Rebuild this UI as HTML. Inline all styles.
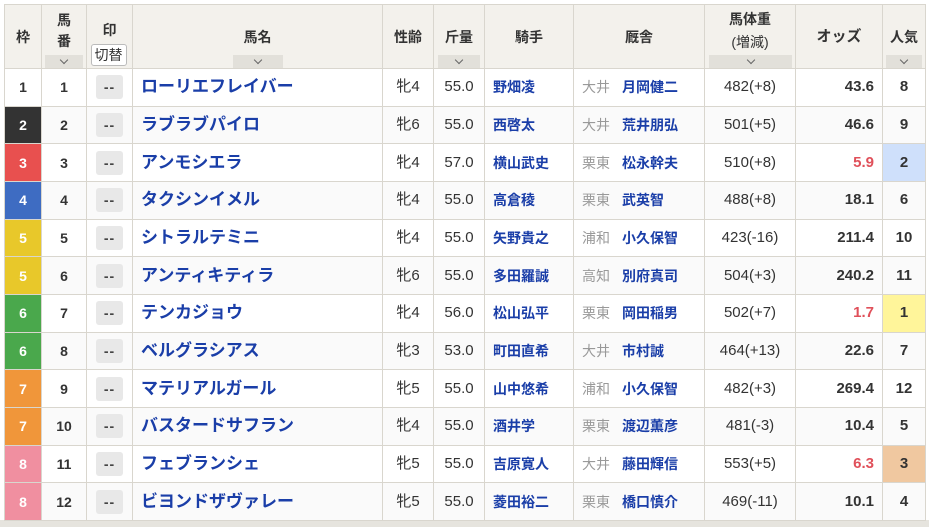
<!DOCTYPE html><html><head><meta charset="utf-8"><style>
body{margin:0;background:#fff;width:929px;height:527px;overflow:hidden;font-family:"Liberation Sans","Noto Sans CJK JP",sans-serif;}
.bg{position:absolute;left:0;top:520px;width:929px;height:7px;background:#e6e4de}
table{position:absolute;left:4px;top:4px;border-collapse:collapse;table-layout:fixed;width:921px}
td,th{border:1px solid #d9d6ce;padding:0;text-align:center;font-size:15px;color:#333;white-space:nowrap;overflow:hidden;line-height:18px}
th{background:#f3f1ec;font-weight:bold;font-size:14px;color:#333}
th>div{position:relative;height:63px;overflow:hidden}
th .t{position:absolute;left:0;right:0;line-height:18px}
.sel{position:absolute;left:50%;top:50px;height:13px;background:#e2e0da}
.sel:after{content:"";position:absolute;left:50%;top:2px;width:5px;height:5px;margin-left:-3px;border-right:1px solid #666;border-bottom:1px solid #666;transform:rotate(45deg)}
tr.r td{height:36.67px;vertical-align:middle}
tr.r:nth-child(odd) td{background:#fafafa}
.w{font-weight:bold;font-size:14px}
.mk{display:inline-block;width:27px;height:24px;background:#e8e8e8;border-radius:3px;font-weight:bold;line-height:24px;color:#444;font-size:14px;vertical-align:middle;letter-spacing:1px}
.nm{text-align:left;padding-left:8px;color:#1a3ea8;font-weight:bold;font-size:17px}
.jk{color:#1a3ea8;font-weight:bold;text-align:left;padding-left:8px;font-size:14px}
.tr{text-align:left;padding-left:8px;font-size:14px}
.tr span{color:#999;margin-right:12px}.tr b{color:#1a3ea8}
.od{text-align:right;padding-right:8px;font-weight:bold}
.red{color:#e0505a}
.pp{font-weight:bold}
.num{font-weight:bold;font-size:14px}
.kb{position:absolute;left:50%;top:39px;margin-left:-19px;width:36px;height:22px;box-sizing:border-box;border:1px solid #bbb;border-radius:3px;font-weight:normal;background:#fff;font-size:14px;line-height:20px}
</style></head><body><div class="bg"></div>
<table>
<colgroup><col style="width:37px"><col style="width:45px"><col style="width:46px"><col style="width:250px"><col style="width:51px"><col style="width:51px"><col style="width:89px"><col style="width:131px"><col style="width:91px"><col style="width:87px"><col style="width:43px"></colgroup>
<tr>
<th><div><span class="t" style="top:23px">枠</span></div></th>
<th><div><span class="t" style="top:6px">馬</span><span class="t" style="top:27px">番</span><span class="sel" style="width:38px;margin-left:-19px"></span></div></th>
<th><div><span class="t" style="top:16px">印</span><span class="kb">切替</span></div></th>
<th><div><span class="t" style="top:23px">馬名</span><span class="sel" style="width:50px;margin-left:-25px"></span></div></th>
<th><div><span class="t" style="top:23px">性齢</span></div></th>
<th><div><span class="t" style="top:23px">斤量</span><span class="sel" style="width:42px;margin-left:-21px"></span></div></th>
<th><div><span class="t" style="top:23px">騎手</span></div></th>
<th><div><span class="t" style="top:23px">厩舎</span></div></th>
<th><div><span class="t" style="top:5px">馬体重</span><span class="t" style="top:28px;font-weight:normal">(増減)</span><span class="sel" style="width:83px;margin-left:-41px"></span></div></th>
<th><div><span class="t" style="top:23px;font-size:15px">オッズ</span></div></th>
<th><div><span class="t" style="top:23px">人気</span><span class="sel" style="width:36px;margin-left:-18px"></span></div></th>
</tr>
<tr class="r"><td class="w">1</td><td class="num">1</td><td><span class="mk">--</span></td><td class="nm">ローリエフレイバー</td><td>牝4</td><td>55.0</td><td class="jk">野畑凌</td><td class="tr"><span>大井</span><b>月岡健二</b></td><td>482(+8)</td><td class="od">43.6</td><td class="pp">8</td></tr>
<tr class="r"><td class="w" style="background:#333;color:#fff">2</td><td class="num">2</td><td><span class="mk">--</span></td><td class="nm">ラブラブパイロ</td><td>牝6</td><td>55.0</td><td class="jk">西啓太</td><td class="tr"><span>大井</span><b>荒井朋弘</b></td><td>501(+5)</td><td class="od">46.6</td><td class="pp">9</td></tr>
<tr class="r"><td class="w" style="background:#e8504f;color:#fff">3</td><td class="num">3</td><td><span class="mk">--</span></td><td class="nm">アンモシエラ</td><td>牝4</td><td>57.0</td><td class="jk">横山武史</td><td class="tr"><span>栗東</span><b>松永幹夫</b></td><td>510(+8)</td><td class="od red">5.9</td><td class="pp" style="background:#cfe0fb">2</td></tr>
<tr class="r"><td class="w" style="background:#3e6cc2;color:#fff">4</td><td class="num">4</td><td><span class="mk">--</span></td><td class="nm">タクシンイメル</td><td>牝4</td><td>55.0</td><td class="jk">高倉稜</td><td class="tr"><span>栗東</span><b>武英智</b></td><td>488(+8)</td><td class="od">18.1</td><td class="pp">6</td></tr>
<tr class="r"><td class="w" style="background:#e8c82a;color:#fff">5</td><td class="num">5</td><td><span class="mk">--</span></td><td class="nm">シトラルテミニ</td><td>牝4</td><td>55.0</td><td class="jk">矢野貴之</td><td class="tr"><span>浦和</span><b>小久保智</b></td><td>423(-16)</td><td class="od">211.4</td><td class="pp">10</td></tr>
<tr class="r"><td class="w" style="background:#e8c82a;color:#fff">5</td><td class="num">6</td><td><span class="mk">--</span></td><td class="nm">アンティキティラ</td><td>牝6</td><td>55.0</td><td class="jk">多田羅誠</td><td class="tr"><span>高知</span><b>別府真司</b></td><td>504(+3)</td><td class="od">240.2</td><td class="pp">11</td></tr>
<tr class="r"><td class="w" style="background:#4aa84c;color:#fff">6</td><td class="num">7</td><td><span class="mk">--</span></td><td class="nm">テンカジョウ</td><td>牝4</td><td>56.0</td><td class="jk">松山弘平</td><td class="tr"><span>栗東</span><b>岡田稲男</b></td><td>502(+7)</td><td class="od red">1.7</td><td class="pp" style="background:#fff59a">1</td></tr>
<tr class="r"><td class="w" style="background:#4aa84c;color:#fff">6</td><td class="num">8</td><td><span class="mk">--</span></td><td class="nm">ベルグラシアス</td><td>牝3</td><td>53.0</td><td class="jk">町田直希</td><td class="tr"><span>大井</span><b>市村誠</b></td><td>464(+13)</td><td class="od">22.6</td><td class="pp">7</td></tr>
<tr class="r"><td class="w" style="background:#f0963a;color:#fff">7</td><td class="num">9</td><td><span class="mk">--</span></td><td class="nm">マテリアルガール</td><td>牝5</td><td>55.0</td><td class="jk">山中悠希</td><td class="tr"><span>浦和</span><b>小久保智</b></td><td>482(+3)</td><td class="od">269.4</td><td class="pp">12</td></tr>
<tr class="r"><td class="w" style="background:#f0963a;color:#fff">7</td><td class="num">10</td><td><span class="mk">--</span></td><td class="nm">バスタードサフラン</td><td>牝4</td><td>55.0</td><td class="jk">酒井学</td><td class="tr"><span>栗東</span><b>渡辺薫彦</b></td><td>481(-3)</td><td class="od">10.4</td><td class="pp">5</td></tr>
<tr class="r"><td class="w" style="background:#f08fa0;color:#fff">8</td><td class="num">11</td><td><span class="mk">--</span></td><td class="nm">フェブランシェ</td><td>牝5</td><td>55.0</td><td class="jk">吉原寛人</td><td class="tr"><span>大井</span><b>藤田輝信</b></td><td>553(+5)</td><td class="od red">6.3</td><td class="pp" style="background:#f0c8a0">3</td></tr>
<tr class="r"><td class="w" style="background:#f08fa0;color:#fff">8</td><td class="num">12</td><td><span class="mk">--</span></td><td class="nm">ビヨンドザヴァレー</td><td>牝5</td><td>55.0</td><td class="jk">菱田裕二</td><td class="tr"><span>栗東</span><b>橋口慎介</b></td><td>469(-11)</td><td class="od">10.1</td><td class="pp">4</td></tr>
</table></body></html>
